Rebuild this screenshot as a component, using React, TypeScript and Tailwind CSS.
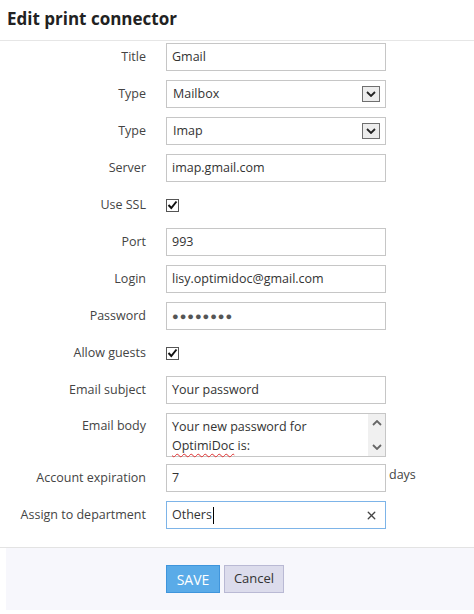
import { X } from 'lucide-react';

const font = { fontFamily: '"Open Sans", "Noto Sans", sans-serif' };

function Label({ children, top }: { children: React.ReactNode; top?: boolean }) {
  return (
    <div className={`w-[146px] shrink-0 text-right text-[12.5px] text-[#444] ${top ? 'pt-[4px]' : ''}`}>
      {children}
    </div>
  );
}

function TextBox({ value }: { value: string }) {
  return (
    <div className="ml-[20px] flex h-[28px] w-[220px] items-center border border-[#c6c6c6] bg-white px-[5px] text-[12.5px] text-[#333]">
      {value}
    </div>
  );
}

function Chevron() {
  return (
    <svg width="10" height="6" viewBox="0 0 10 6" fill="none" stroke="#222" strokeWidth="1.8">
      <path d="M1 1l4 4 4-4" />
    </svg>
  );
}

function SelectBox({ value }: { value: string }) {
  return (
    <div className="ml-[20px] flex h-[28px] w-[220px] items-center justify-between border border-[#c6c6c6] bg-white pl-[6px] pr-[5px] text-[12.5px] text-[#333]">
      <span>{value}</span>
      <span className="flex h-[16px] w-[18px] items-center justify-center border border-[#6f6f6f] bg-[#ececec]">
        <Chevron />
      </span>
    </div>
  );
}

function Check() {
  return (
    <div className="ml-[20px] flex h-[13px] w-[13px] items-center justify-center border border-[#555] bg-white">
      <svg width="11" height="10" viewBox="0 0 11 10" fill="none" stroke="#111" strokeWidth="2">
        <path d="M1.5 5l2.8 3L9.5 1.5" />
      </svg>
    </div>
  );
}

export default function App() {
  return (
    <div className="h-[614px] w-[474px] overflow-hidden bg-white" style={font}>
      {/* Header */}
      <div className="h-[41px] border-b border-[#e6e6e6] pl-[7px] pt-[6px] text-[17px] font-bold text-[#222]">
        Edit print connector
      </div>

      {/* Form */}
      <div className="flex flex-col pt-[2px]">
        <div className="flex h-[28px] items-center">
          <Label>Title</Label>
          <TextBox value="Gmail" />
        </div>
        <div className="mt-[9px] flex h-[28px] items-center">
          <Label>Type</Label>
          <SelectBox value="Mailbox" />
        </div>
        <div className="mt-[9px] flex h-[28px] items-center">
          <Label>Type</Label>
          <SelectBox value="Imap" />
        </div>
        <div className="mt-[9px] flex h-[28px] items-center">
          <Label>Server</Label>
          <TextBox value="imap.gmail.com" />
        </div>
        <div className="mt-[9px] flex h-[28px] items-center">
          <Label>Use SSL</Label>
          <Check />
        </div>
        <div className="mt-[9px] flex h-[28px] items-center">
          <Label>Port</Label>
          <TextBox value="993" />
        </div>
        <div className="mt-[9px] flex h-[28px] items-center">
          <Label>Login</Label>
          <TextBox value="lisy.optimidoc@gmail.com" />
        </div>
        <div className="mt-[9px] flex h-[28px] items-center">
          <Label>Password</Label>
          <div className="ml-[20px] flex h-[28px] w-[220px] items-center border border-[#c6c6c6] bg-white px-[5px] text-[11px] tracking-[1px] text-[#555]">
            ●●●●●●●●
          </div>
        </div>
        <div className="mt-[9px] flex h-[28px] items-center">
          <Label>Allow guests</Label>
          <Check />
        </div>
        <div className="mt-[9px] flex h-[28px] items-center">
          <Label>Email subject</Label>
          <TextBox value="Your password" />
        </div>
        <div className="mt-[9px] flex h-[44px] items-start">
          <Label top>Email body</Label>
          <div className="ml-[20px] flex h-[44px] w-[220px] border border-[#c6c6c6] bg-white text-[12.5px] text-[#333]">
            <div className="flex-1 pl-[5px] pt-[3px] leading-[19px]">
              Your new password for
              <br />
              <span className="underline decoration-[#e03030] decoration-wavy decoration-[1px] underline-offset-[3px]">OptimiDoc</span> is:
            </div>
            <div className="flex w-[17px] flex-col items-center justify-between bg-[#f0f0f0] py-[6px]">
              <svg width="10" height="6" viewBox="0 0 10 6" fill="none" stroke="#666" strokeWidth="1.8">
                <path d="M1 5l4-4 4 4" />
              </svg>
              <svg width="10" height="6" viewBox="0 0 10 6" fill="none" stroke="#666" strokeWidth="1.8">
                <path d="M1 1l4 4 4-4" />
              </svg>
            </div>
          </div>
        </div>
        <div className="mt-[7px] flex h-[28px] items-center">
          <Label>Account expiration</Label>
          <TextBox value="7" />
          <span className="ml-[3px] -mt-[6px] text-[12.5px] text-[#444]">days</span>
        </div>
        <div className="mt-[9px] flex h-[28px] items-center">
          <Label>Assign to department</Label>
          <div className="ml-[20px] flex h-[28px] w-[220px] items-center justify-between border border-[#7db4e8] bg-white pl-[5px] pr-[7px] text-[12.5px] text-[#333]">
            <span className="flex items-center">
              Others<span className="ml-[1px] inline-block h-[17px] w-[1px] bg-black" />
            </span>
            <X size={13} strokeWidth={2.5} color="#444" />
          </div>
        </div>
      </div>

      {/* Footer */}
      <div className="mt-[18px] border-t border-[#e3e3e3] pl-[6px]">
        <div className="flex h-[62px] items-start bg-[#f7f7fc] pl-[160px] pt-[17px]">
          <button className="h-[28px] w-[54px] border border-[#3f95dc] bg-[#5aabe8] text-[14px] text-white">
            SAVE
          </button>
          <button className="ml-[4px] h-[28px] w-[60px] border border-[#b9b9d4] bg-[#dcdcec] text-[13px] text-[#333]">
            Cancel
          </button>
        </div>
      </div>
    </div>
  );
}
